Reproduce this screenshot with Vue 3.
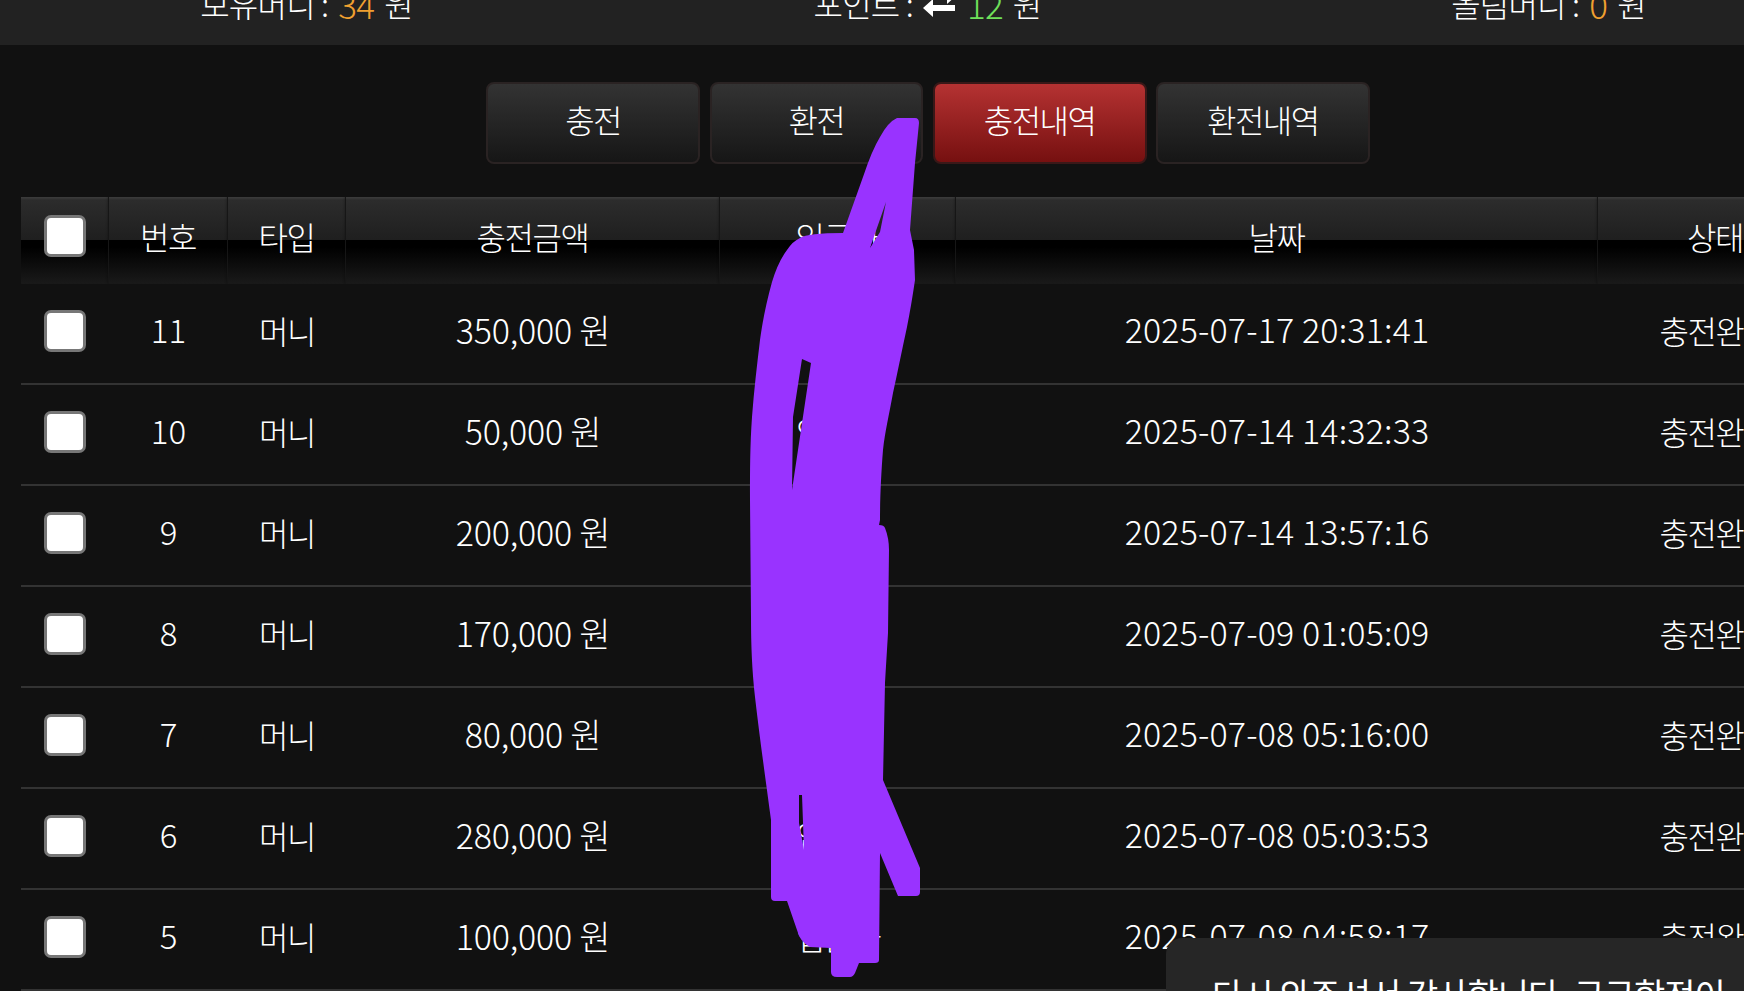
<script setup>
const tabs = [
  { label: '충전', active: false },
  { label: '환전', active: false },
  { label: '충전내역', active: true },
  { label: '환전내역', active: false }
]
const heads = ['번호', '타입', '충전금액', '입금자', '날짜', '상태']
const rows = [
  { no: 11, amount: '350,000 원', date: '2025-07-17 20:31:41' },
  { no: 10, amount: '50,000 원', date: '2025-07-14 14:32:33' },
  { no: 9, amount: '200,000 원', date: '2025-07-14 13:57:16' },
  { no: 8, amount: '170,000 원', date: '2025-07-09 01:05:09' },
  { no: 7, amount: '80,000 원', date: '2025-07-08 05:16:00' },
  { no: 6, amount: '280,000 원', date: '2025-07-08 05:03:53' },
  { no: 5, amount: '100,000 원', date: '2025-07-08 04:58:17' }
]
const scribble = 'M897 118 L915 118 Q919 118 919 123 L915 163 L910 230 L914 250 L915 280 C912 300 910 312 907 327 C902 350 898 370 893 393 C889 415 885 432 883 450 C881 475 880 500 880 520 L879 525 Q884 525 885 528 Q889 538 889 550 L888 633 C887 650 886 665 885 683 L883 780 L920 868 L920 892 Q920 896 916 896 L898 896 L880 853 L879 960 Q879 963 875 963 L859 963 L855 973 Q853 977 850 977 L837 977 Q831 977 831 972 L831 948 L810 947 Q800 942 797 930 L787 901 L775 901 Q771 901 771 897 L771 820 C765 775 760 740 755 697 C752 670 751 645 751 617 L750 500 C750 470 750 445 752 417 C754 390 757 365 760 340 C763 318 767 300 772 282 Q778 262 787 250 Q793 241 800 238 Q808 233 843 233 L863 177 Q872 150 880 137 Q888 122 897 118 Z M802 359 L811 363 L792 490 L793 417 Z M886 202 L870 248 L880 232 Z M799 795 L802 795 L804 850 L799 823 Z'
</script>

<template>
  <div class="viewport">
    <div class="page">
      <div class="topbar">
        <div class="stat">보유머니 : <span class="figure orange">34</span> 원</div>
        <div class="stat">
          포인트 :
          <svg class="swap" width="34" height="30" viewBox="0 0 34 30">
            <path d="M0 18 L10 9 L10 15 L32 15 L32 21 L10 21 L10 27 Z" fill="#fff" />
            <path d="M34 5 L24 -4 L24 2 L2 2 L2 8 L24 8 L24 14 Z" fill="#fff" />
          </svg>
          <span class="figure green">12</span> 원
        </div>
        <div class="stat">올림머니 : <span class="figure orange">0</span> 원</div>
      </div>

      <div class="tabs">
        <div v-for="t in tabs" :key="t.label" class="tab" :class="{ active: t.active }">{{ t.label }}</div>
      </div>

      <div class="table">
        <div class="head-row">
          <div class="hcell"><span class="check"></span></div>
          <div v-for="h in heads" :key="h" class="hcell kr">{{ h }}</div>
        </div>
        <div v-for="r in rows" :key="r.no" class="row">
          <div class="cell"><span class="check row-check"></span></div>
          <div class="cell no">{{ r.no }}</div>
          <div class="cell kr">머니</div>
          <div class="cell amount">{{ r.amount }}</div>
          <div class="cell kr">입금자</div>
          <div class="cell date">{{ r.date }}</div>
          <div class="cell kr">충전완료</div>
        </div>
      </div>
    </div>

    <svg class="scribble" width="1744" height="991" viewBox="0 0 1744 991">
      <path :d="scribble" fill="#9933ff" fill-rule="evenodd" />
    </svg>

    <div class="toast">다시 와주셔서 감사합니다. 구구합전이</div>
  </div>
</template>

<style scoped>
.viewport {
  position: relative;
  width: 1744px;
  height: 991px;
  overflow: hidden;
  background: #111;
  color: #fff;
  font-family: "Noto Sans CJK KR", "Noto Sans", sans-serif;
  font-weight: 200;
  font-size: 32px;
}
.page {
  width: 1863px;
  margin-left: -4px;
}
.topbar {
  display: grid;
  grid-template-columns: repeat(3, 621px);
  height: 45px;
  background: #222;
}
.stat {
  display: flex;
  justify-content: center;
  align-items: center;
  gap: 10px;
  height: 48px;
  margin-top: -21px;
  white-space: nowrap;
  letter-spacing: -0.8px;
}
.figure {
  font-size: 35px;
}
.swap {
  overflow: visible;
  margin-top: 4px;
}
.orange { color: #f0a030; }
.green { color: #6fe05a; }
.tabs {
  display: flex;
  justify-content: center;
  gap: 9.5px;
  margin-top: 37px;
  padding-left: 1px;
}
.tab {
  box-sizing: border-box;
  width: 213.75px;
  height: 82px;
  display: flex;
  align-items: center;
  justify-content: center;
  padding-bottom: 9px;
  border: 2px solid #2a2323;
  border-radius: 8px;
  background: linear-gradient(#333, #161616);
  letter-spacing: -1.5px;
}
.tab.active {
  border-color: #3a1818;
  background: linear-gradient(#b53232, #761010);
}
.table {
  width: 1812px;
  margin-top: 33px;
  margin-left: 25px;
}
.head-row,
.row {
  display: grid;
  grid-template-columns: 88px 119px 118px 374px 236px 642px 235px;
}
.head-row {
  height: 87px;
  background: linear-gradient(#3e3e3e 0, #2c2c2c 3px, #1f1f1f 43px, #000 43px, #000 50px, #1a1a1a 87px);
}
.hcell {
  display: flex;
  align-items: center;
  justify-content: center;
  padding-bottom: 9px;
  box-sizing: border-box;
  border-right: 1px solid #161616;
  box-shadow: inset -2px 0 2px -1px rgba(0, 0, 0, 0.2);
}
.row {
  height: 101px;
  box-sizing: border-box;
  border-bottom: 2px solid #333;
}
.cell {
  display: flex;
  align-items: center;
  justify-content: center;
  padding-bottom: 8px;
  white-space: nowrap;
}
.no { font-size: 33px; padding-bottom: 10px; }
.amount { font-size: 34px; letter-spacing: -0.2px; }
.date { font-size: 34px; letter-spacing: 0.15px; padding-bottom: 10px; }
.kr {
  letter-spacing: -1.5px;
}
.check {
  box-sizing: border-box;
  width: 42px;
  height: 42px;
  background: #fff;
  border: 3px solid #777;
  border-radius: 7px;
}
.row-check {
  margin-top: 2px;
}
.scribble {
  position: absolute;
  left: 0;
  top: 0;
}
.toast {
  position: absolute;
  left: 1166px;
  top: 938px;
  width: 640px;
  height: 120px;
  box-sizing: border-box;
  padding: 31px 46px;
  background: #262626;
  border-radius: 16px;
  font-size: 34px;
  font-weight: 400;
  white-space: nowrap;
  letter-spacing: -1px;
}
</style>

<style>
html, body {
  margin: 0;
  background: #111;
  overflow: hidden;
}
</style>
